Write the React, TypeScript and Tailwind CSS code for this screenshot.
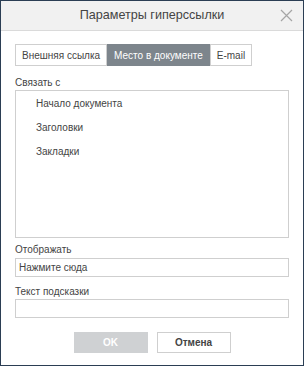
import { useState } from 'react'

const tabs = ['Внешняя ссылка', 'Место в документе', 'E-mail']
const places = ['Начало документа', 'Заголовки', 'Закладки']

export default function App() {
  const [tab, setTab] = useState(1)
  const [display, setDisplay] = useState('Нажмите сюда')
  const [tip, setTip] = useState('')

  return (
    <div className="h-[367px] w-[305px] bg-white font-['Liberation_Sans',Arial,sans-serif] text-[10px] text-[#444]">
      <div className="flex h-[366px] w-[304px] flex-col border border-[#2b3e54] bg-white">
        <div className="relative flex h-[30px] shrink-0 items-center justify-center border-b border-[#dadada] bg-[#f1f1f1]">
          <span className="text-[12.6px] text-[#444]">Параметры гиперссылки</span>
          <button className="absolute right-[10px] top-[8px] text-[#a5a5a5]" aria-label="close">
            <svg width="13" height="13" viewBox="0 0 13 13" fill="none" stroke="currentColor" strokeWidth="1.2">
              <path d="M1 1L12 12M12 1L1 12" />
            </svg>
          </button>
        </div>

        <div className="flex flex-col px-[14px]">
          <div className="mt-[13px] flex h-[22px]">
            {tabs.map((t, i) => (
              <button
                key={t}
                onClick={() => setTab(i)}
                className={
                  i === tab
                    ? 'border border-[#7d858c] bg-[#7d858c] px-[6px] text-white'
                    : 'border border-[#cfcfcf] bg-white px-[6px] text-[#444]'
                }
              >
                {t}
              </button>
            ))}
          </div>

          <div className="mt-[10px] leading-[13px]">Связать с</div>
          <div className="mt-[1px] h-[148px] border border-[#cfcfcf]">
            {places.map((p) => (
              <div key={p} className="flex h-[24px] items-center pl-[20px]">
                {p}
              </div>
            ))}
          </div>

          <div className="mt-[5px] leading-[13px]">Отображать</div>
          <input
            value={display}
            onChange={(e) => setDisplay(e.target.value)}
            className="mt-[2px] h-[19px] border border-[#cfcfcf] px-[3px] text-[10px] text-[#444] outline-none"
          />

          <div className="mt-[8px] leading-[13px]">Текст подсказки</div>
          <input
            value={tip}
            onChange={(e) => setTip(e.target.value)}
            className="mt-[1px] h-[19px] border border-[#cfcfcf] px-[3px] text-[10px] outline-none"
          />

          <div className="mt-[14px] flex justify-center gap-[9px]">
            <button className="h-[21px] w-[74px] bg-[#cfd1d3] font-bold text-white">OK</button>
            <button className="h-[21px] w-[74px] border border-[#cfcfcf] bg-white font-bold text-[#444]">
              Отмена
            </button>
          </div>
        </div>
      </div>
    </div>
  )
}
